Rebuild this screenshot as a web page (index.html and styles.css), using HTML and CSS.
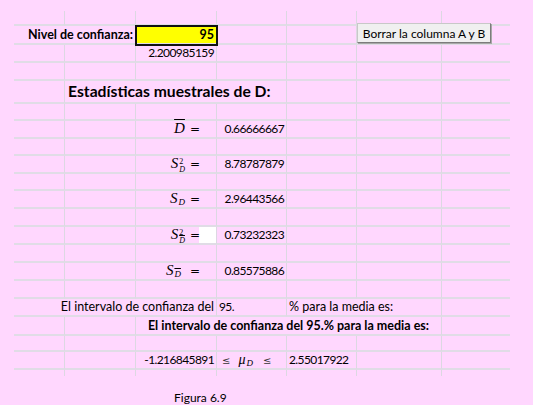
FILE: index.html
```html
<!DOCTYPE html>
<html lang="es">
<head>
    <meta charset="UTF-8">
    <title>Figura 6.9</title>
    <link rel="stylesheet" href="styles.css">
</head>
<body>
<div class="hoja">
    <table class="celdas">
        <colgroup>
            <col class="c-a"><col class="c-b"><col class="c-c"><col class="c-d"><col class="c-e"><col class="c-f"><col class="c-g">
        </colgroup>
        <tr class="h15"><td></td><td></td><td></td><td></td><td></td><td></td><td></td></tr>
        <tr class="h19">
            <td colspan="2" class="der negrita">Nivel de confianza:</td>
            <td class="der negrita entrada">95</td>
            <td></td><td></td><td></td><td></td>
        </tr>
        <tr class="h17"><td></td><td></td><td class="der num">2.200985159</td><td></td><td></td><td></td><td></td></tr>
        <tr class="h18"><td></td><td></td><td></td><td></td><td></td><td></td><td></td></tr>
        <tr class="h22">
            <td></td>
            <td colspan="3" class="titulo">Estadísticas muestrales de D:</td>
            <td></td><td></td><td></td>
        </tr>
        <tr class="h17"><td></td><td></td><td></td><td></td><td></td><td></td><td></td></tr>
        <tr class="h18">
            <td></td><td></td>
            <td class="ec"><span class="f"><i class="barra">D</i><span class="igual">=</span></span></td>
            <td class="der num">0.66666667</td>
            <td></td><td></td><td></td>
        </tr>
        <tr class="h17"><td></td><td></td><td></td><td></td><td></td><td></td><td></td></tr>
        <tr class="h18">
            <td></td><td></td>
            <td class="ec"><span class="f"><i>S</i><span class="ind"><span>2</span><i>D</i></span><span class="igual">=</span></span></td>
            <td class="der num">8.78787879</td>
            <td></td><td></td><td></td>
        </tr>
        <tr class="h17"><td></td><td></td><td></td><td></td><td></td><td></td><td></td></tr>
        <tr class="h18">
            <td></td><td></td>
            <td class="ec"><span class="f"><i>S</i><i class="sub">D</i><span class="igual">=</span></span></td>
            <td class="der num">2.96443566</td>
            <td></td><td></td><td></td>
        </tr>
        <tr class="h18"><td></td><td></td><td></td><td></td><td></td><td></td><td></td></tr>
        <tr class="h17">
            <td></td><td></td>
            <td class="ec blanco"><span class="f"><i>S</i><span class="ind"><span>2</span><i class="barra">D</i></span><span class="igual">=</span></span></td>
            <td class="der num">0.73232323</td>
            <td></td><td></td><td></td>
        </tr>
        <tr class="h18"><td></td><td></td><td></td><td></td><td></td><td></td><td></td></tr>
        <tr class="h17">
            <td></td><td></td>
            <td class="ec"><span class="f"><i>S</i><i class="sub barra">D</i><span class="igual ancho">=</span></span></td>
            <td class="der num">0.85575886</td>
            <td></td><td></td><td></td>
        </tr>
        <tr class="h18"><td></td><td></td><td></td><td></td><td></td><td></td><td></td></tr>
        <tr class="h17">
            <td colspan="3" class="der">El intervalo de confianza del</td>
            <td class="num">95.</td>
            <td colspan="2">% para la media es:</td>
            <td></td>
        </tr>
        <tr class="h19">
            <td></td><td></td>
            <td colspan="4" class="centro negrita">El intervalo de confianza del 95.% para la media es:</td>
            <td></td>
        </tr>
        <tr class="h16"><td></td><td></td><td></td><td></td><td></td><td></td><td></td></tr>
        <tr class="h18">
            <td></td><td></td>
            <td class="der num">-1.216845891</td>
            <td class="rango"><span class="f"><span class="leq">≤</span><i class="mu">μ</i><i class="sub">D</i><span class="leq">≤</span></span></td>
            <td class="num">2.55017922</td>
            <td></td><td></td>
        </tr>
        <tr class="h6 ultima"><td></td><td></td><td></td><td></td><td></td><td></td><td></td></tr>
    </table>
    <button class="borrar" type="button">Borrar la columna A y B</button>
</div>
<p class="figura">Figura 6.9</p>
</body>
</html>
```

FILE: styles.css
```css
*{ padding: 0; margin: 0;}
body{
    background: #ffd7fe;
    font-family: Lato, "Liberation Sans", sans-serif;
    font-size: 12.5px;
    color: #000;
}
.hoja{
    position: relative;
    width: 496px;
    margin: 11px 0 0 14px;
}
.celdas{
    width: 496px;
    table-layout: fixed;
    border-collapse: separate;
    border-spacing: 0;
}
.c-a{ width: 51px;}
.c-b{ width: 71px;}
.c-c{ width: 81px;}
.c-d{ width: 70px;}
.c-e{ width: 70px;}
.c-f{ width: 85px;}
.c-g{ width: 68px;}

.celdas td{
    border-right: 1px solid #dcd8e2;
    border-bottom: 2px solid #e0dce6;
    padding: 0 2px 1px;
    line-height: 15px;
    vertical-align: bottom;
    white-space: nowrap;
}
.celdas td:last-child{ border-right: none;}
.ultima td{ border-bottom: none;}

.h6{ height: 6px;}
.h15{ height: 15px;}
.h16{ height: 16px;}
.h17{ height: 17px;}
.h18{ height: 18px;}
.h19{ height: 19px;}
.h22{ height: 22px;}

.der{ text-align: right;}
.centro{ text-align: center;}
.negrita{ font-weight: bold;}
.num{
    font-size: 12px;
    letter-spacing: -0.6px;
}

/* celda amarilla del nivel de confianza */
.entrada{
    background: #ffff00;
    outline: 2px solid #111;
    outline-offset: -1px;
}

.celdas td.titulo{
    font-size: 15.7px;
    font-weight: bold;
    line-height: 20px;
    padding-left: 3px;
}

/* etiquetas con formulas */
.celdas td.ec{
    text-align: right;
    padding-right: 16px;
    font-family: "Liberation Serif", serif;
    font-size: 15px;
}
.f{
    display: block;
    height: 15px;
    line-height: 15px;
}
.ec i, .rango i{ font-style: italic;}
.celdas td.blanco{
    background: linear-gradient(to left, #fff 17px, transparent 17px);
}
.igual{
    font-family: "DejaVu Sans", sans-serif;
    font-size: 12px;
    margin-left: 5px;
}
.ancho{ margin-left: 9px;}
.barra{ text-decoration: overline;}
.ind{
    display: inline-block;
    vertical-align: -4px;
    font-size: 8px;
    line-height: 8px;
    text-align: left;
    margin-left: 1px;
}
.ind span, .ind i{ display: block;}
.sub{
    font-size: 9px;
    vertical-align: -2px;
    margin-left: 1px;
}
.celdas td.rango{
    font-family: "Liberation Serif", serif;
    font-size: 14px;
    padding-left: 5px;
}
.leq{
    font-family: "DejaVu Sans", sans-serif;
    font-size: 10px;
    color: #333;
}
.mu{ margin-left: 8px;}
.sub + .leq{ margin-left: 10px;}

/* boton de la hoja */
.borrar{
    position: absolute;
    left: 343px;
    top: 12px;
    width: 134px;
    height: 20px;
    background: #f0f0f0;
    border: 1px solid #c8c8c8;
    border-right-color: #7c7c7c;
    border-bottom-color: #7c7c7c;
    box-shadow: 1px 1px 0 #a8a8a8;
    font-family: Lato, "Liberation Sans", sans-serif;
    font-size: 12px;
    color: #000;
}

.figura{
    margin-top: 14px;
    padding-left: 174px;
    line-height: 15px;
    font-size: 12px;
}
```
